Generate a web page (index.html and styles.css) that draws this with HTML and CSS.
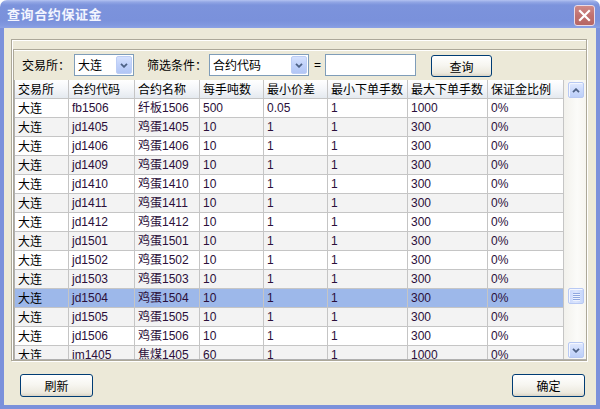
FILE: index.html
```html
<!DOCTYPE html>
<html lang="zh-CN">
<head>
<meta charset="utf-8">
<title>查询合约保证金</title>
<link rel="stylesheet" href="styles.css">
</head>
<body>
<div class="window">
  <div class="titlebar">
    <span class="title">查询合约保证金</span>
    <div class="close">
      <svg width="13" height="13" viewBox="0 0 13 13"><path d="M2 2 L11 11 M11 2 L2 11" stroke="#fff" stroke-width="2.2" stroke-linecap="square" fill="none"/></svg>
    </div>
  </div>
  <div class="client">
    <div class="group">
      <div class="panel">
        <div class="toolbar">
          <span class="label lbl-ex">交易所：</span>
          <div class="combo combo-ex">
            <span class="val">大连</span>
            <span class="drop"><svg width="8" height="5" viewBox="0 0 8 5"><polyline points="1,0.8 4,3.8 7,0.8" stroke="#4d6185" stroke-width="1.8" fill="none"/></svg></span>
          </div>
          <span class="label lbl-filter">筛选条件：</span>
          <div class="combo combo-filter">
            <span class="val">合约代码</span>
            <span class="drop"><svg width="8" height="5" viewBox="0 0 8 5"><polyline points="1,0.8 4,3.8 7,0.8" stroke="#4d6185" stroke-width="1.8" fill="none"/></svg></span>
          </div>
          <span class="eq">=</span>
          <div class="textinput"></div>
          <div class="btn btn-query">查询</div>
        </div>
        <div class="grid">
          <div class="tablewrap">
            <table>
              <colgroup>
                <col class="c1"><col class="c2"><col class="c3"><col class="c4"><col class="c5"><col class="c6"><col class="c7"><col class="c8">
              </colgroup>
              <thead>
                <tr><th>交易所</th><th>合约代码</th><th>合约名称</th><th>每手吨数</th><th>最小价差</th><th>最小下单手数</th><th>最大下单手数</th><th>保证金比例</th></tr>
              </thead>
              <tbody>
                <tr><td>大连</td><td>fb1506</td><td>纤板1506</td><td>500</td><td>0.05</td><td>1</td><td>1000</td><td>0%</td></tr>
                <tr class="alt"><td>大连</td><td>jd1405</td><td>鸡蛋1405</td><td>10</td><td>1</td><td>1</td><td>300</td><td>0%</td></tr>
                <tr><td>大连</td><td>jd1406</td><td>鸡蛋1406</td><td>10</td><td>1</td><td>1</td><td>300</td><td>0%</td></tr>
                <tr class="alt"><td>大连</td><td>jd1409</td><td>鸡蛋1409</td><td>10</td><td>1</td><td>1</td><td>300</td><td>0%</td></tr>
                <tr><td>大连</td><td>jd1410</td><td>鸡蛋1410</td><td>10</td><td>1</td><td>1</td><td>300</td><td>0%</td></tr>
                <tr class="alt"><td>大连</td><td>jd1411</td><td>鸡蛋1411</td><td>10</td><td>1</td><td>1</td><td>300</td><td>0%</td></tr>
                <tr><td>大连</td><td>jd1412</td><td>鸡蛋1412</td><td>10</td><td>1</td><td>1</td><td>300</td><td>0%</td></tr>
                <tr class="alt"><td>大连</td><td>jd1501</td><td>鸡蛋1501</td><td>10</td><td>1</td><td>1</td><td>300</td><td>0%</td></tr>
                <tr><td>大连</td><td>jd1502</td><td>鸡蛋1502</td><td>10</td><td>1</td><td>1</td><td>300</td><td>0%</td></tr>
                <tr class="alt"><td>大连</td><td>jd1503</td><td>鸡蛋1503</td><td>10</td><td>1</td><td>1</td><td>300</td><td>0%</td></tr>
                <tr class="sel"><td>大连</td><td>jd1504</td><td>鸡蛋1504</td><td>10</td><td>1</td><td>1</td><td>300</td><td>0%</td></tr>
                <tr class="alt"><td>大连</td><td>jd1505</td><td>鸡蛋1505</td><td>10</td><td>1</td><td>1</td><td>300</td><td>0%</td></tr>
                <tr><td>大连</td><td>jd1506</td><td>鸡蛋1506</td><td>10</td><td>1</td><td>1</td><td>300</td><td>0%</td></tr>
                <tr class="alt"><td>大连</td><td>jm1405</td><td>焦煤1405</td><td>60</td><td>1</td><td>1</td><td>1000</td><td>0%</td></tr>
              </tbody>
            </table>
          </div>
          <div class="vscroll">
            <div class="sbtn">
              <svg width="8" height="5" viewBox="0 0 8 5"><polyline points="1,4.2 4,1.2 7,4.2" stroke="#4d6185" stroke-width="1.8" fill="none"/></svg>
            </div>
            <div class="thumb"><span></span><span></span><span></span><span></span></div>
            <div class="sbtn sbtn-down">
              <svg width="8" height="5" viewBox="0 0 8 5"><polyline points="1,0.8 4,3.8 7,0.8" stroke="#4d6185" stroke-width="1.8" fill="none"/></svg>
            </div>
          </div>
        </div>
      </div>
    </div>
    <div class="footer">
      <div class="btn btn-foot">刷新</div>
      <div class="btn btn-foot">确定</div>
    </div>
  </div>
</div>
</body>
</html>
```

FILE: styles.css
```css
* { box-sizing: border-box; }
html, body { margin: 0; padding: 0; }
body {
  width: 600px;
  height: 409px;
  overflow: hidden;
  background: #ffffff;
  font-family: "Liberation Sans", "Noto Sans CJK SC", sans-serif;
  font-size: 12px;
  color: #000;
}
.window {
  width: 600px;
  height: 409px;
  display: flex;
  flex-direction: column;
}
.titlebar {
  height: 28px;
  flex: none;
  display: flex;
  justify-content: space-between;
  align-items: flex-start;
  padding: 0 5px 0 7px;
  border-radius: 7px 7px 0 0;
  background: linear-gradient(180deg, #b4c2f1 0px, #93a7e5 2px, #7c93dc 5px, #7a91db 20px, #8198df 25px, #8ca2e5 28px);
}
.title {
  margin-top: 6px;
  color: #f3f5ff;
  font-family: "Noto Sans CJK SC", sans-serif;
  font-weight: bold;
  font-size: 13px;
  letter-spacing: 0.6px;
  line-height: 16px;
}
.close {
  margin-top: 5px;
  width: 21px;
  height: 21px;
  border: 1px solid #eadbe6;
  border-radius: 3px;
  background: linear-gradient(180deg, #d08a88 0%, #c0716f 50%, #b66664 100%);
  display: flex;
  align-items: center;
  justify-content: center;
}
.client {
  flex: 1;
  display: flex;
  flex-direction: column;
  background: #ece9d8;
  border: 4px solid #7b91db;
  border-top: 0;
  padding: 11px 9px 0 7px;
}
.group {
  height: 322px;
  flex: none;
  display: flex;
  border: 1px solid #aca899;
  box-shadow: inset 1px 1px 0 #fff, 1px 1px 0 #fff;
  padding: 9px 0 0 1px;
}
.panel {
  flex: 1;
  display: flex;
  flex-direction: column;
  border-top: 1px solid #aca899;
  border-left: 1px solid #aca899;
  box-shadow: inset 0 1px 0 #fff;
}
.toolbar {
  height: 30px;
  flex: none;
  display: flex;
  align-items: flex-start;
  padding: 4px 0 0 8px;
}
.label {
  line-height: 22px;
  height: 22px;
  font-family: "Noto Sans CJK SC", sans-serif;
  white-space: nowrap;
}
.lbl-ex { width: 52px; }
.lbl-filter { width: 62px; margin-left: 13px; }
.combo {
  height: 22px;
  border: 1px solid #7f9db9;
  background: #fff;
  display: flex;
}
.combo-ex { width: 60px; }
.combo-filter { width: 100px; }
.combo .val {
  flex: 1;
  padding-left: 3px;
  line-height: 20px;
  font-family: "Noto Sans CJK SC", sans-serif;
  white-space: nowrap;
  overflow: hidden;
}
.combo .drop {
  width: 16px;
  margin: 1px;
  border: 1px solid #bccdf5;
  border-radius: 2px;
  background: linear-gradient(180deg, #d5e1fd 0%, #c0d1fa 50%, #b2c6f5 100%);
  display: flex;
  align-items: center;
  justify-content: center;
}
.eq {
  width: 11px;
  margin-left: 5px;
  line-height: 22px;
  font-size: 12px;
}
.textinput {
  width: 91px;
  height: 22px;
  border: 1px solid #7f9db9;
  background: #fff;
}
.btn {
  border: 1px solid #003c74;
  border-radius: 3px;
  background: linear-gradient(180deg, #ffffff 0%, #f7f6f1 45%, #ece9de 85%, #d9d3c5 100%);
  display: flex;
  align-items: center;
  justify-content: center;
  font-family: "Noto Sans CJK SC", sans-serif;
  font-size: 12px;
  color: #000;
}
.btn-query {
  width: 61px;
  height: 22px;
  margin-left: 15px;
  margin-top: 1px;
}
.grid {
  flex: 1;
  display: flex;
  min-height: 0;
  border-left: 1px solid #b0b0b0;
  border-bottom: 1px solid #b0b0b0;
  background: #fff;
}
.tablewrap {
  width: 549px;
  flex: none;
  overflow: hidden;
}
table {
  width: 549px;
  table-layout: fixed;
  border-collapse: separate;
  border-spacing: 0;
}
col.c1 { width: 54px; }
col.c2 { width: 66px; }
col.c3 { width: 65px; }
col.c4 { width: 64px; }
col.c5 { width: 64px; }
col.c6 { width: 80px; }
col.c7 { width: 80px; }
col.c8 { width: 76px; }
th, td {
  height: 19px;
  padding: 0 0 0 3px;
  line-height: 18px;
  text-align: left;
  font-weight: normal;
  white-space: nowrap;
  overflow: hidden;
  border-right: 1px solid #c5c5c5;
  border-bottom: 1px solid #c5c5c5;
}
th {
  font-family: "Noto Sans CJK SC", sans-serif;
  background: linear-gradient(180deg, #ffffff 0%, #f4f6f9 50%, #e4e9ef 100%);
  color: #000;
}
td { color: #2b0f3a; background: #fff; }
td:first-child { color: #000; font-family: "Noto Sans CJK SC", sans-serif; }
tr.alt td { background: #f3f3f3; }
tr.sel td { background: #9db8ea; }
.vscroll {
  flex: 1;
  display: flex;
  flex-direction: column;
  padding: 2px 2px 1px 4px;
  background: linear-gradient(90deg, #f2f1ec 0%, #fbfbf9 60%, #f6f5f0 100%);
}
.sbtn {
  width: 16px;
  height: 16px;
  flex: none;
  border: 1px solid #b8c9f3;
  border-radius: 2px;
  background: linear-gradient(180deg, #e2eafe 0%, #ccdafc 50%, #bccff8 100%);
  box-shadow: inset 1px 1px 0 #f4f7ff;
  display: flex;
  align-items: center;
  justify-content: center;
}
.sbtn-down { margin-top: auto; }
.thumb {
  width: 16px;
  height: 16px;
  flex: none;
  margin-top: 190px;
  border: 1px solid #b8c9f3;
  border-radius: 2px;
  background: linear-gradient(90deg, #cbd9fc 0%, #dbe5fd 50%, #c6d6fb 100%);
  box-shadow: inset 1px 1px 0 #f4f7ff;
  display: flex;
  flex-direction: column;
  align-items: center;
  justify-content: center;
  gap: 1px;
}
.thumb span {
  display: block;
  width: 7px;
  height: 1px;
  background: #8fa7df;
  box-shadow: 0 1px 0 #eef3ff;
}
.footer {
  flex: 1;
  display: flex;
  justify-content: space-between;
  align-items: flex-start;
  padding: 13px 2px 0 9px;
}
.btn-foot {
  width: 73px;
  height: 23px;
}
```
